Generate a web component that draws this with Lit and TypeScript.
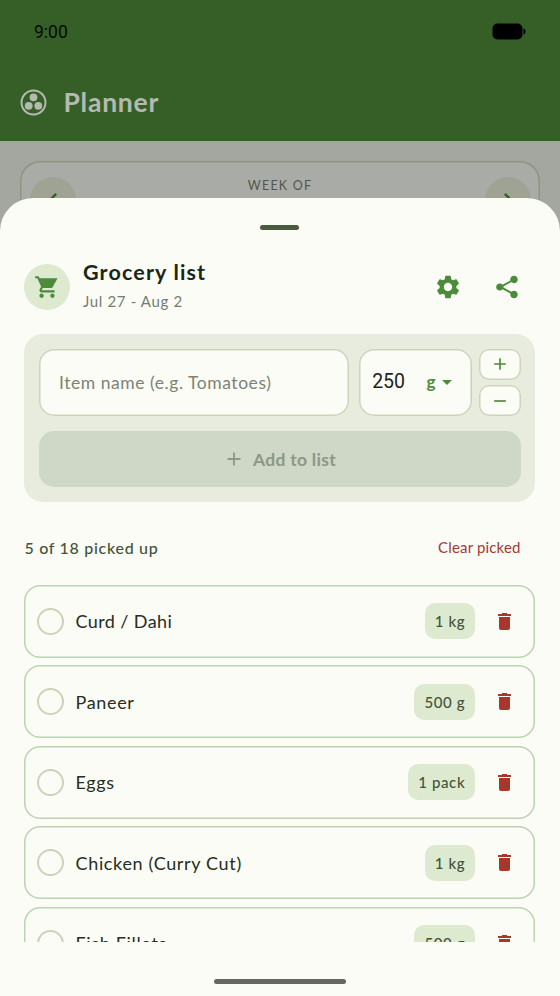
import { LitElement, html, css, svg } from "lit";
import { customElement, property } from "lit/decorators.js";

interface GroceryItem {
  name: string;
  amount: string;
}

const plus = html`<svg class="pm" viewBox="0 0 24 24"><path d="M19 13h-6v6h-2v-6H5v-2h6V5h2v6h6v2z" /></svg>`;
const minus = html`<svg class="pm" viewBox="0 0 24 24"><path d="M19 13H5v-2h14v2z" /></svg>`;

@customElement("grocery-row")
export class GroceryRow extends LitElement {
  @property() name = "";
  @property() amount = "";

  static styles = css`
    :host {
      display: flex;
      align-items: center;
      box-sizing: border-box;
      flex: none;
      height: 73px;
      padding: 0 19.5px 0 12.5px;
      box-shadow: inset 0 0 0 1.5px #bcd3b2;
      border-radius: 16px;
    }
    .check {
      width: 23px;
      height: 23px;
      border: 2px solid #cdd2b9;
      border-radius: 50%;
      margin-right: 12px;
    }
    .name {
      flex: 1;
      font-size: 18px;
      line-height: 26px;
      letter-spacing: 0.66px;
      color: #262e22;
      white-space: nowrap;
    }
    .tight {
      letter-spacing: 0.4px;
    }
    .amount {
      height: 36px;
      line-height: 36px;
      padding: 0 9.3px 0 10px;
      border-radius: 10px;
      background: #ddead0;
      color: #42543a;
      font-size: 15px;
      font-weight: 500;
      letter-spacing: 0.6px;
      white-space: nowrap;
    }
    .trash {
      width: 13px;
      height: 17px;
      margin: 0 5px 0 23px;
      fill: #a8372b;
      flex: none;
    }
  `;

  render() {
    return html`
      <span class="check"></span>
      <span class="name ${this.name.includes("/") ? "tight" : ""}">${this.name}</span>
      <span class="amount">${this.amount}</span>
      <svg class="trash" viewBox="0 0 13 17">
        <path d="M4 0h5v1h4v2H0V1h4zM1 4h11v11q0 2-2 2H3q-2 0-2-2z" />
      </svg>
    `;
  }
}

@customElement("app-root")
export class AppRoot extends LitElement {
  private items: GroceryItem[] = [
    { name: "Curd / Dahi", amount: "1 kg" },
    { name: "Paneer", amount: "500 g" },
    { name: "Eggs", amount: "1 pack" },
    { name: "Chicken (Curry Cut)", amount: "1 kg" },
    { name: "Fish Fillets", amount: "500 g" },
  ];

  static styles = css`
    :host {
      display: grid;
      width: 560px;
      height: 996px;
      overflow: hidden;
      background: #a4a6a0;
      font-family: Lato, "Open Sans", sans-serif;
      font-kerning: normal;
    }
    .back,
    .sheet {
      grid-area: 1 / 1;
      min-height: 0;
      min-width: 0;
    }
    .top {
      height: 141px;
      box-sizing: border-box;
      background: #355f27;
    }
    .status {
      display: flex;
      justify-content: space-between;
      align-items: center;
      height: 63px;
      padding: 0 34px;
      font: 17.5px/24px Roboto, sans-serif;
      color: #050a04;
    }
    .battery {
      width: 34px;
      height: 17px;
      fill: #000;
    }
    .title {
      display: flex;
      align-items: center;
      gap: 16.5px;
      height: 78px;
      padding-left: 20px;
      font-size: 26.5px;
      font-weight: 700;
      letter-spacing: 0.75px;
      color: #b5bab0;
    }
    .title svg {
      width: 27px;
      height: 27px;
    }
    .week {
      display: flex;
      justify-content: space-between;
      box-sizing: border-box;
      margin: 20px 20px 0;
      padding: 16px 9.5px 0;
      height: 110px;
      box-shadow: inset 0 0 0 1.5px #8f947c;
      border-radius: 20px;
      background: #a9aba6;
      font-size: 12.5px;
      line-height: 17px;
      letter-spacing: 1.2px;
      color: #51574e;
    }
    .nav {
      width: 46px;
      height: 46px;
      border-radius: 50%;
      background: #9ea393;
      display: grid;
      place-items: center;
    }
    .nav svg {
      width: 28px;
      height: 28px;
      fill: #2f6120;
    }
    .sheet {
      display: flex;
      flex-direction: column;
      margin-top: 198px;
      padding: 27px 25px 0 24px;
      border-radius: 33px 33px 0 0;
      background: #fbfcf6;
      position: relative;
    }
    .handle {
      align-self: center;
      width: 39px;
      height: 5px;
      border-radius: 3px;
      background: #4a5b3f;
      flex: none;
    }
    .head {
      display: flex;
      align-items: center;
      height: 56px;
      margin-top: 29px;
      padding-right: 14.5px;
      flex: none;
    }
    .cart {
      display: grid;
      place-items: center;
      width: 46px;
      height: 46px;
      border-radius: 50%;
      background: #ddead0;
      margin-right: 13px;
    }
    .green {
      fill: #4b8b3b;
    }
    .cart svg {
      width: 26px;
      height: 26px;
    }
    .heading {
      flex: 1;
      padding-bottom: 6px;
    }
    h1 {
      margin: 0;
      font-size: 21.5px;
      line-height: 28px;
      font-weight: 700;
      letter-spacing: 1.15px;
      color: #1a2717;
    }
    .dates {
      font-size: 15px;
      line-height: 20px;
      margin-top: 5px;
      letter-spacing: 0.65px;
      color: #757c6f;
    }
    .gear,
    .share {
      width: 28px;
      height: 28px;
    }
    .share {
      margin-left: 30.5px;
    }
    .form {
      box-sizing: border-box;
      height: 168px;
      margin-top: 18.5px;
      padding: 15px 14.5px 15px 15px;
      border-radius: 19px;
      background: #e8ecde;
      flex: none;
    }
    .fields {
      display: flex;
      height: 67.5px;
      margin-bottom: 15px;
    }
    .box {
      box-sizing: border-box;
      display: flex;
      align-items: center;
      box-shadow: inset 0 0 0 1.5px #cdd3b9;
      border-radius: 15px;
      background: #fbfcf6;
    }
    .item {
      width: 310px;
      padding-left: 20px;
      margin-right: 10px;
      font-size: 17.5px;
      letter-spacing: 0.55px;
      color: #7c8375;
      white-space: nowrap;
    }
    .qty {
      width: 113px;
      padding-left: 13.5px;
      margin-right: 7.5px;
      font: 19.5px/24px Roboto, sans-serif;
      color: #1d251a;
    }
    .unit {
      font-family: Lato, sans-serif;
      font-size: 17px;
      font-weight: 700;
      color: #4b8b3b;
      margin-left: 21.5px;
    }
    .caret {
      width: 10px;
      height: 5px;
      margin-left: 6px;
    }
    .steps {
      display: flex;
      flex-direction: column;
      justify-content: space-between;
    }
    .step {
      width: 41.5px;
      height: 31px;
      border-radius: 10px;
      justify-content: center;
      fill: #4b8b3b;
    }
    .pm {
      width: 20px;
      height: 20px;
      flex: none;
    }
    .add .pm {
      width: 22px;
      height: 22px;
    }
    .add {
      display: flex;
      align-items: center;
      justify-content: center;
      gap: 7.5px;
      height: 56px;
      border-radius: 15px;
      background: #cfd7c6;
      fill: #8d9884;
      color: #8d9884;
      font-size: 17.5px;
      font-weight: 700;
      letter-spacing: 0.3px;
    }
    .summary {
      display: flex;
      justify-content: space-between;
      align-items: center;
      height: 24px;
      margin: 33.5px 14.5px 25.5px 0.5px;
      flex: none;
    }
    .count {
      font-size: 16px;
      letter-spacing: 0.7px;
      font-weight: 500;
      color: #42543a;
    }
    .clear {
      font-size: 15px;
      letter-spacing: 0.15px;
      color: #a33a30;
    }
    .list {
      display: flex;
      flex-direction: column;
      gap: 7.5px;
      height: 357px;
      overflow: hidden;
      flex: none;
    }
    .bar {
      align-self: center;
      width: 132px;
      height: 5px;
      margin-top: 37px;
      border-radius: 3px;
      background: #656763;
      flex: none;
    }
  `;

  render() {
    const dots = [
      [13.5, 8.3],
      [8.7, 16.8],
      [18.3, 16.8],
    ];
    return html`
      <div class="back">
        <div class="top">
          <div class="status">
            <span>9:00</span>
            <svg class="battery" viewBox="0 0 34 17">
              <rect x="0.5" y="0.5" width="30" height="16" rx="5" />
              <path d="M31.5 5.2q2 .4 2 3.3t-2 3.3z" />
            </svg>
          </div>
          <div class="title">
            <svg viewBox="0 0 27 27" fill="#b5bab0">
              <circle cx="13.5" cy="13.5" r="12" fill="none" stroke="#b5bab0" stroke-width="2" />
              ${dots.map(([x, y]) => svg`<circle cx=${x} cy=${y} r="3.9" />`)}
            </svg>
            <span>Planner</span>
          </div>
        </div>
        <div class="week">
          <span class="nav"><svg viewBox="0 0 24 24"><path d="M15.41 7.41L14 6l-6 6 6 6 1.41-1.41L10.83 12z" /></svg></span>
          <span>WEEK OF</span>
          <span class="nav"><svg viewBox="0 0 24 24"><path d="M10 6L8.59 7.41 13.17 12l-4.58 4.59L10 18l6-6z" /></svg></span>
        </div>
      </div>
      <div class="sheet">
        <div class="handle"></div>
        <div class="head">
          <div class="cart">
            <svg class="green" viewBox="0 0 24 24">
              <path
                d="M7 18c-1.1 0-1.99.9-1.99 2S5.9 22 7 22s2-.9 2-2-.9-2-2-2zM1 2v2h2l3.6 7.59-1.35 2.45c-.16.28-.25.61-.25.96 0 1.1.9 2 2 2h12v-2H7.42c-.14 0-.25-.11-.25-.25l.03-.12.9-1.63h7.45c.75 0 1.41-.41 1.75-1.03L21.7 4H5.21l-.94-2H1zm16 16c-1.1 0-1.99.9-1.99 2s.89 2 1.99 2 2-.9 2-2-.9-2-2-2z"
              />
            </svg>
          </div>
          <div class="heading">
            <h1>Grocery list</h1>
            <div class="dates">Jul 27 - Aug 2</div>
          </div>
          <svg class="gear green" viewBox="0 0 24 24">
            <path
              d="M19.14 12.94c.04-.3.06-.61.06-.94 0-.32-.02-.64-.07-.94l2.03-1.58c.18-.14.23-.41.12-.61l-1.92-3.32c-.12-.22-.37-.29-.59-.22l-2.39.96c-.5-.38-1.03-.7-1.62-.94l-.36-2.54c-.04-.24-.24-.41-.48-.41h-3.84c-.24 0-.43.17-.47.41l-.36 2.54c-.59.24-1.13.57-1.62.94l-2.39-.96c-.22-.08-.47 0-.59.22L2.74 8.87c-.12.21-.08.47.12.61l2.03 1.58c-.05.3-.09.63-.09.94s.02.64.07.94l-2.03 1.58c-.18.14-.23.41-.12.61l1.92 3.32c.12.22.37.29.59.22l2.39-.96c.5.38 1.03.7 1.62.94l.36 2.54c.05.24.24.41.48.41h3.84c.24 0 .44-.17.47-.41l.36-2.54c.59-.24 1.13-.56 1.62-.94l2.39.96c.22.08.47 0 .59-.22l1.92-3.32c.12-.22.07-.47-.12-.61l-2.01-1.58zM12 15.6c-1.98 0-3.6-1.62-3.6-3.6s1.62-3.6 3.6-3.6 3.6 1.62 3.6 3.6-1.62 3.6-3.6 3.6z"
            />
          </svg>
          <svg class="share green" viewBox="0 0 24 24">
            <path
              d="M18 15.3c-.8 0-1.6.3-2.2.8L8.91 12.5c.06-.3.06-.7 0-1L15.8 7.8c.6.5 1.4.9 2.2.9 1.8 0 3.2-1.4 3.2-3.2S19.8 2.3 18 2.3s-3.2 1.4-3.2 3.2c0 .3 0 .6.1.9L8.1 10.1C7.5 9.3 6.7 8.9 5.8 8.9c-1.75 0-3.1 1.4-3.1 3.1s1.4 3.1 3.1 3.1c.9 0 1.7-.4 2.3-1.1l6.8 3.6c-.1.3-.1.6-.1.9 0 1.8 1.4 3.2 3.2 3.2s3.2-1.4 3.2-3.2-1.4-3.2-3.2-3.2z"
            />
          </svg>
        </div>
        <div class="form">
          <div class="fields">
            <div class="box item">Item name (e.g. Tomatoes)</div>
            <div class="box qty">
              <span>250</span>
              <span class="unit">g</span>
              <svg class="caret green" viewBox="0 0 10 5"><path d="M0 0h10L5 5z" /></svg>
            </div>
            <div class="steps">
              <div class="box step">${plus}</div>
              <div class="box step">${minus}</div>
            </div>
          </div>
          <div class="add">${plus}<span>Add to list</span></div>
        </div>
        <div class="summary">
          <span class="count">5 of 18 picked up</span>
          <span class="clear">Clear picked</span>
        </div>
        <div class="list">
          ${this.items.map((i) => html`<grocery-row .name=${i.name} .amount=${i.amount}></grocery-row>`)}
        </div>
        <div class="bar"></div>
      </div>
    `;
  }
}
